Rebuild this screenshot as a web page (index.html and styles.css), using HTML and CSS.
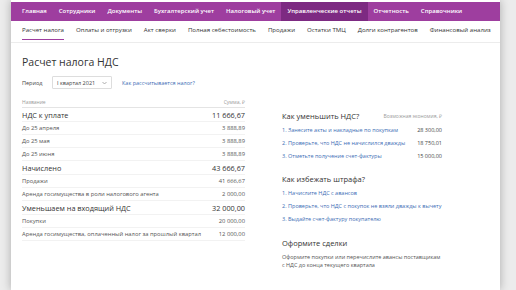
FILE: index.html
```html
<!DOCTYPE html>
<html>

<head>
    <title>Расчет налога НДС</title>
    <link rel="stylesheet" href="styles.css">
</head>

<body>
    <div class="page">
        <div class="main-nav">
            <a href="#">Главная</a>
            <a href="#">Сотрудники</a>
            <a href="#">Документы</a>
            <a href="#">Бухгалтерский учет</a>
            <a href="#">Налоговый учет</a>
            <a href="#" class="active">Управленческие отчеты</a>
            <a href="#">Отчетность</a>
            <a href="#">Справочники</a>
        </div>
        <div class="sub-nav">
            <a href="#" class="active">Расчет налога</a>
            <a href="#">Оплаты и отгрузки</a>
            <a href="#">Акт сверки</a>
            <a href="#">Полная себестоимость</a>
            <a href="#">Продажи</a>
            <a href="#">Остатки ТМЦ</a>
            <a href="#">Долги контрагентов</a>
            <a href="#">Финансовый анализ</a>
        </div>

        <div class="content">
            <h1>Расчет налога НДС</h1>

            <div class="period">
                <span class="period-label">Период</span>
                <div class="select">
                    <span>I квартал 2021</span>
                    <svg width="5" height="4" viewBox="0 0 5 4"><path d="M0.5 1 L2.5 3 L4.5 1" fill="none" stroke="#999" stroke-width="0.8"/></svg>
                </div>
                <a href="#" class="link">Как рассчитывается налог?</a>
            </div>

            <div class="columns">
                <div class="tax-table">
                    <div class="row head">
                        <span>Название</span>
                        <span>Сумма, ₽</span>
                    </div>
                    <div class="row big">
                        <span>НДС к уплате</span>
                        <span>11 666,67</span>
                    </div>
                    <div class="row">
                        <span>До 25 апреля</span>
                        <span>3 888,89</span>
                    </div>
                    <div class="row">
                        <span>До 25 мая</span>
                        <span>3 888,89</span>
                    </div>
                    <div class="row">
                        <span>До 25 июня</span>
                        <span>3 888,89</span>
                    </div>
                    <div class="row big">
                        <span>Начислено</span>
                        <span>43 666,67</span>
                    </div>
                    <div class="row">
                        <span>Продажи</span>
                        <span>41 666,67</span>
                    </div>
                    <div class="row">
                        <span>Аренда госимущества в роли налогового агента</span>
                        <span>2 000,00</span>
                    </div>
                    <div class="row big">
                        <span>Уменьшаем на входящий НДС</span>
                        <span>32 000,00</span>
                    </div>
                    <div class="row">
                        <span>Покупки</span>
                        <span>20 000,00</span>
                    </div>
                    <div class="row">
                        <span>Аренда госимущества, оплаченный налог за прошлый квартал</span>
                        <span>12 000,00</span>
                    </div>
                </div>

                <div class="tips">
                    <div class="tip-head first">
                        <h3>Как уменьшить НДС?</h3>
                        <span class="hint">Возможная экономия, ₽</span>
                    </div>
                    <div class="tip"><a href="#">1. Занесите акты и накладные по покупкам</a><span>28 300,00</span></div>
                    <div class="tip"><a href="#">2. Проверьте, что НДС не начислился дважды</a><span>18 750,01</span></div>
                    <div class="tip"><a href="#">3. Отметьте получение счет-фактуры</a><span>15 000,00</span></div>

                    <div class="tip-head">
                        <h3>Как избежать штрафа?</h3>
                    </div>
                    <div class="tip"><a href="#">1. Начислите НДС с авансов</a></div>
                    <div class="tip"><a href="#">2. Проверьте, что НДС с покупок не взяли дважды к вычету</a></div>
                    <div class="tip"><a href="#">3. Выдайте счет-фактуру покупателю</a></div>

                    <div class="tip-head last">
                        <h3>Оформите сделки</h3>
                    </div>
                    <p class="note">Оформите покупки или перечислите авансы поставщикам<br>с НДС до конца текущего квартала</p>
                </div>
            </div>
        </div>
    </div>
</body>

</html>
```

FILE: styles.css
```css
body {
    margin: 0;
    background: #ececec;
    font-family: "Open Sans", Arial, sans-serif;
    color: #333333;
    height: 290px;
    overflow: hidden;
}

a {
    text-decoration: none;
    white-space: nowrap;
}

.page {
    margin-left: 11px;
    width: 489px;
    height: 290px;
    padding-top: 2px;
    box-sizing: border-box;
    background: #ffffff;
    box-shadow: 0 0 9px rgba(0, 0, 0, 0.28);
}

.main-nav {
    display: flex;
    height: 19px;
    padding-left: 5px;
    background: #9e3e9f;
}

.main-nav a {
    padding: 0 6px;
    line-height: 19px;
    font-size: 6px;
    font-weight: 600;
    color: #ffffff;
}

.main-nav a.active {
    background: #7d2a82;
}

.sub-nav {
    display: flex;
    gap: 12px;
    height: 22px;
    padding-left: 11px;
    border-bottom: 1px solid #ececec;
    box-sizing: border-box;
}

.sub-nav a {
    line-height: 18px;
    font-size: 6.1px;
    color: #333333;
    border-bottom: 1.5px solid transparent;
    height: 19px;
    box-sizing: border-box;
}

.sub-nav a.active {
    border-bottom-color: #9e3e9f;
}

.content {
    padding: 0 11px;
}

h1 {
    margin: 0;
    padding-top: 11px;
    height: 22px;
    line-height: 16px;
    font-size: 10.5px;
    font-weight: 400;
    color: #333333;
}

.period {
    display: flex;
    align-items: center;
    height: 13px;
    font-size: 5.5px;
}

.period-label {
    width: 30px;
    color: #444444;
}

.select {
    display: flex;
    align-items: center;
    justify-content: space-between;
    width: 60px;
    height: 13px;
    padding: 0 4px;
    box-sizing: border-box;
    border: 1px solid #dddddd;
    border-radius: 1px;
    color: #444444;
}

.link {
    margin-left: 10px;
    color: #3d6db5;
}

.columns {
    display: grid;
    grid-template-columns: 223px 160px;
    gap: 37px;
    margin-top: 7px;
}

.row {
    display: flex;
    justify-content: space-between;
    align-items: center;
    height: 13px;
    font-size: 5.8px;
    color: #555555;
    border-bottom: 1px solid #f2f2f2;
    box-sizing: border-box;
}

.row.head {
    height: 12px;
    color: #9a9a9a;
    font-size: 5px;
    border-bottom-color: #e4e4e4;
}

.row.big {
    height: 14px;
    font-size: 7.3px;
    color: #333333;
}

.tips {
    padding-top: 12px;
    font-size: 5.5px;
}

.tip-head {
    display: flex;
    justify-content: space-between;
    align-items: center;
    height: 14px;
    margin-top: 10px;
}

.tip-head.first {
    margin-top: 0;
    height: 15px;
}

.tip-head.last {
    margin-top: 11px;
}

.tip-head h3 {
    margin: 0;
    font-size: 7.5px;
    font-weight: 400;
    color: #333333;
}

.hint {
    font-size: 5px;
    color: #9a9a9a;
}

.tip {
    display: flex;
    justify-content: space-between;
    align-items: center;
    height: 13px;
}

.tip a {
    color: #3d6db5;
}

.tip span {
    color: #444444;
}

.note {
    margin: 3px 0 0;
    line-height: 8px;
    color: #555555;
}
```
